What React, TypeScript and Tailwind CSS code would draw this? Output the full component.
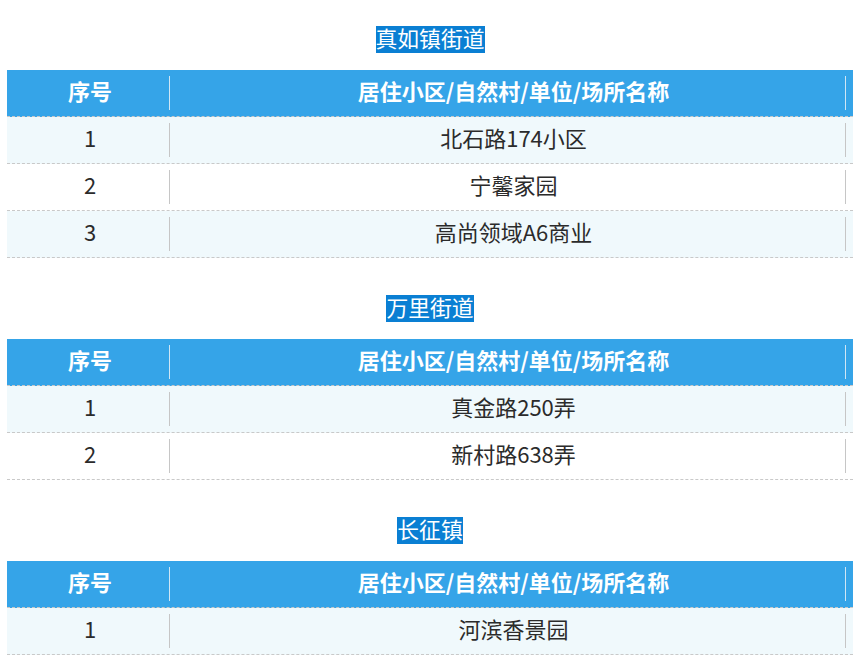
import React from "react";

type Section = { title: string; rows: string[] };

const sections: Section[] = [
  { title: "真如镇街道", rows: ["北石路174小区", "宁馨家园", "高尚领域A6商业"] },
  { title: "万里街道", rows: ["真金路250弄", "新村路638弄"] },
  { title: "长征镇", rows: ["河滨香景园"] },
];

function Row({
  a,
  b,
  header,
  shaded,
}: {
  a: string;
  b: string;
  header?: boolean;
  shaded?: boolean;
}) {
  const bg = header ? "bg-[#35a4e8]" : shaded ? "bg-[#f0f9fc]" : "bg-white";
  const text = header ? "text-white font-bold" : "text-[#2b2b2b]";
  const div = header ? "bg-[#cfe6f5]" : "bg-[#c6c6c6]";
  return (
    <div
      className={`flex h-[47px] items-center border-b border-dashed border-[#c9c9c9] ${bg} ${text} text-[22px]`}
    >
      <div className="w-[162px] pl-[4px] pb-[6px] text-center leading-[40px]">{a}</div>
      <div className={`h-[34px] w-px ${div}`} />
      <div className="flex-1 pl-[12px] pb-[6px] text-center leading-[40px]">{b}</div>
      <div className={`h-[34px] w-px ${div}`} />
      <div className="w-[7px]" />
    </div>
  );
}

export default function App() {
  return (
    <div
      className="min-h-[666px] bg-white pt-[26px]"
      style={{ fontFamily: '"Noto Sans CJK SC", "Noto Sans", sans-serif' }}
    >
      <div className="ml-[7px] w-[846px]">
        {sections.map((s, i) => (
          <div key={s.title} className={i > 0 ? "mt-[37px]" : ""}>
            <div className="mb-[17px] flex h-[27px] justify-center">
              <span className="inline-block h-[27px] bg-[#0a7fd3] pb-[4px] text-[21.8px] leading-[23px] text-white">
                {s.title}
              </span>
            </div>
            <Row a="序号" b="居住小区/自然村/单位/场所名称" header />
            {s.rows.map((r, j) => (
              <Row key={r} a={String(j + 1)} b={r} shaded={j % 2 === 0} />
            ))}
          </div>
        ))}
      </div>
    </div>
  );
}
